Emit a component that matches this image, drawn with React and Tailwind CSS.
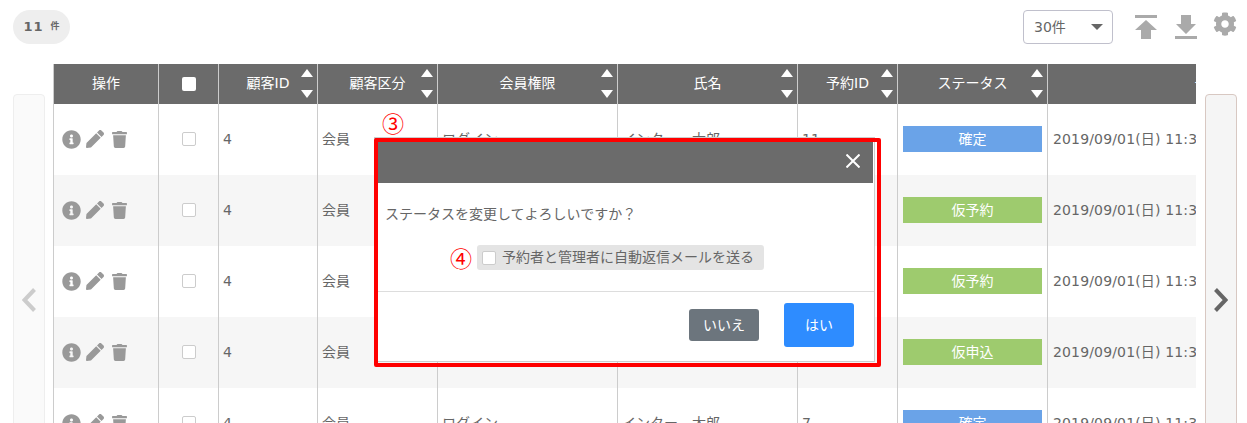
import React from "react";
import { FaInfoCircle, FaPen, FaTrash, FaCog } from "react-icons/fa";

const headers = [
  { label: "操作", w: "w-[105px]" },
  { label: "check", w: "w-[60px]" },
  { label: "顧客ID", w: "w-[99px]", sort: true },
  { label: "顧客区分", w: "w-[120px]", sort: true },
  { label: "会員権限", w: "w-[180px]", sort: true },
  { label: "氏名", w: "w-[180px]", sort: true },
  { label: "予約ID", w: "w-[100px]", sort: true },
  { label: "ステータス", w: "w-[150px]", sort: true },
  { label: "予約日時", w: "w-[350px]" },
];

const rows = [
  { id: 11, status: "確定", color: "bg-[#6aa3e8]" },
  { id: 10, status: "仮予約", color: "bg-[#9ecb6e]" },
  { id: 9, status: "仮予約", color: "bg-[#9ecb6e]" },
  { id: 8, status: "仮申込", color: "bg-[#9ecb6e]" },
  { id: 7, status: "確定", color: "bg-[#6aa3e8]" },
];

function SortArrows() {
  return (
    <svg className="absolute right-[4px] top-[5px]" width="12" height="29" viewBox="0 0 12 29">
      <path d="M6 0L12 8H0Z" fill="#fff" />
      <path d="M0 21H12L6 29Z" fill="#fff" />
    </svg>
  );
}

function HeaderCell({ h }) {
  return (
    <th className={`${h.w} relative h-[40px] border-l border-[#ccc] bg-[#6b6b6b] p-0 text-center text-[14px] font-normal text-white`}>
      {h.label === "check" ? (
        <span className="mx-auto block h-[14px] w-[14px] rounded-[2px] bg-white" />
      ) : (
        <span className="relative -top-[1px]">{h.label}</span>
      )}
      {h.sort && <SortArrows />}
    </th>
  );
}

function Row({ row, index }) {
  const td = "h-[71px] border-l border-[#ccc] p-0 px-[4px] pb-[1px] align-middle text-[14px] text-[#666]";
  return (
    <tr className={index % 2 === 1 ? "bg-[#f6f6f6]" : "bg-white"}>
      <td className={td}>
        <div className="flex items-center pl-[4px] text-[#999]">
          <FaInfoCircle size={19} />
          <FaPen size={18} className="ml-[5px]" />
          <FaTrash size={17} className="ml-[7px]" />
        </div>
      </td>
      <td className={td}>
        <span className="mx-auto block h-[14px] w-[14px] rounded-[2px] border border-[#ccc] bg-white" />
      </td>
      <td className={td}>4</td>
      <td className={td}>会員</td>
      <td className={td}>ログイン</td>
      <td className={td}>インター　太郎</td>
      <td className={td}>{row.id}</td>
      <td className={`${td} px-[5px]`}>
        <div className={`${row.color} flex h-[26px] items-center justify-center text-white`}>{row.status}</div>
      </td>
      <td className={`${td} whitespace-nowrap pl-[5px] tracking-[0.15px]`}>2019/09/01(日) 11:30</td>
    </tr>
  );
}

function Modal() {
  return (
    <div className="absolute left-[374px] top-[137px] flex h-[225px] w-[501px] flex-col border border-[#ccc] bg-white text-[#666]">
      <div className="mr-[1px] flex h-[45px] shrink-0 items-center justify-end bg-[#6b6b6b] pr-[13px]">
        <svg width="14" height="14" viewBox="0 0 14 14" stroke="#fff" strokeWidth="2">
          <path d="M0.5 0.5L13.5 13.5M13.5 0.5L0.5 13.5" />
        </svg>
      </div>
      <div className="h-[109px] shrink-0 border-b border-[#ddd]">
        <p className="mt-[20px] pl-[10px] text-[14px] leading-[22px]">ステータスを変更してよろしいですか？</p>
        <div className="mt-[20px] flex items-center pl-[75px]">
          <span className="w-[22px] text-center font-['Noto_Sans_CJK_JP'] text-[22px] leading-[25px] text-[#f00]">④</span>
          <label className="ml-[5px] flex h-[25px] w-[287px] items-center rounded-[3px] bg-[#e4e4e4] pl-[5px] text-[14px]">
            <span className="h-[14px] w-[14px] rounded-[2px] border border-[#ccc] bg-white" />
            <span className="ml-[6px]">予約者と管理者に自動返信メールを送る</span>
          </label>
        </div>
      </div>
      <div className="flex flex-1 items-center justify-end pb-[3px] pr-[20px]">
        <button className="h-[32px] w-[70px] rounded-[3px] bg-[#6c757d] text-[14px] text-white">いいえ</button>
        <button className="ml-[25px] h-[44px] w-[70px] rounded-[3px] bg-[#2e8cff] text-[14px] text-white">はい</button>
      </div>
    </div>
  );
}

export default function App() {
  return (
    <div
      className="relative h-[423px] w-[1247px] overflow-hidden bg-white text-[#666]"
      style={{ fontFamily: '"DejaVu Sans", "Noto Sans CJK JP", sans-serif' }}
    >
      <div className="flex h-[64px] items-start pl-[13px] pt-[10px]">
        <div className="flex h-[34px] w-[57px] items-center justify-center rounded-full bg-[#eee] font-bold">
          <span className="text-[13px] tracking-[1px]">11</span>
          <span className="ml-[7px] text-[9px]">件</span>
        </div>
        <div className="ml-[953px] flex h-[34px] w-[90px] items-center justify-between rounded-[4px] border border-[#c0c0cc] pl-[10px] pr-[9px] text-[14px]">
          <span>30件</span>
          <span className="h-0 w-0 border-x-[6px] border-t-[6px] border-x-transparent border-t-[#666]" />
        </div>
        <div className="ml-[22px] mt-[5px] flex items-start">
          <svg width="22" height="24" viewBox="0 0 22 24" fill="#aaa">
            <path d="M0 0H22V3H0ZM11 5L22 15H16V24H6V15H0Z" />
          </svg>
          <svg className="ml-[18px]" width="22" height="24" viewBox="0 0 22 24" fill="#aaa">
            <path d="M6 0H16V9H21L11 19L1 9H6ZM0 21H22V24H0Z" />
          </svg>
          <FaCog size={24} className="ml-[16px] -mt-[3px] text-[#aaa]" />
        </div>
      </div>

      <div className="flex items-start pl-[13px]">
        <div className="mt-[30px] flex h-[400px] w-[32px] shrink-0 justify-center rounded-[4px] border border-[#eee] bg-[#fafafa] pt-[193px]">
          <svg width="14" height="24" viewBox="0 0 14 24" fill="none" stroke="#ccc" strokeWidth="4">
            <path d="M12.5 1.5L2.5 12L12.5 22.5" />
          </svg>
        </div>
        <div className="ml-[8px] w-[1143px] shrink-0 overflow-hidden">
          <table className="w-[1344px] table-fixed border-separate border-spacing-0">
            <thead>
              <tr>
                {headers.map(h => <HeaderCell key={h.label} h={h} />)}
              </tr>
            </thead>
            <tbody>
              {rows.map((r, i) => <Row key={r.id} row={r} index={i} />)}
            </tbody>
          </table>
        </div>
        <div className="ml-[9px] mt-[30px] flex h-[400px] w-[32px] shrink-0 justify-center rounded-[4px] border border-[#d8c8c2] bg-[#f5f5f5] pt-[193px]">
          <svg width="14" height="24" viewBox="0 0 14 24" fill="none" stroke="#666" strokeWidth="4">
            <path d="M1.5 1.5L11.5 12L1.5 22.5" />
          </svg>
        </div>
      </div>

      <span className="absolute left-[382px] top-[110px] font-['Noto_Sans_CJK_JP'] text-[22px] leading-[25px] text-[#f00]">③</span>
      <Modal />
      <div className="pointer-events-none absolute left-[374px] top-[138px] h-[229px] w-[507px] rounded-[2px] border-4 border-[#f00]" />
    </div>
  );
}
